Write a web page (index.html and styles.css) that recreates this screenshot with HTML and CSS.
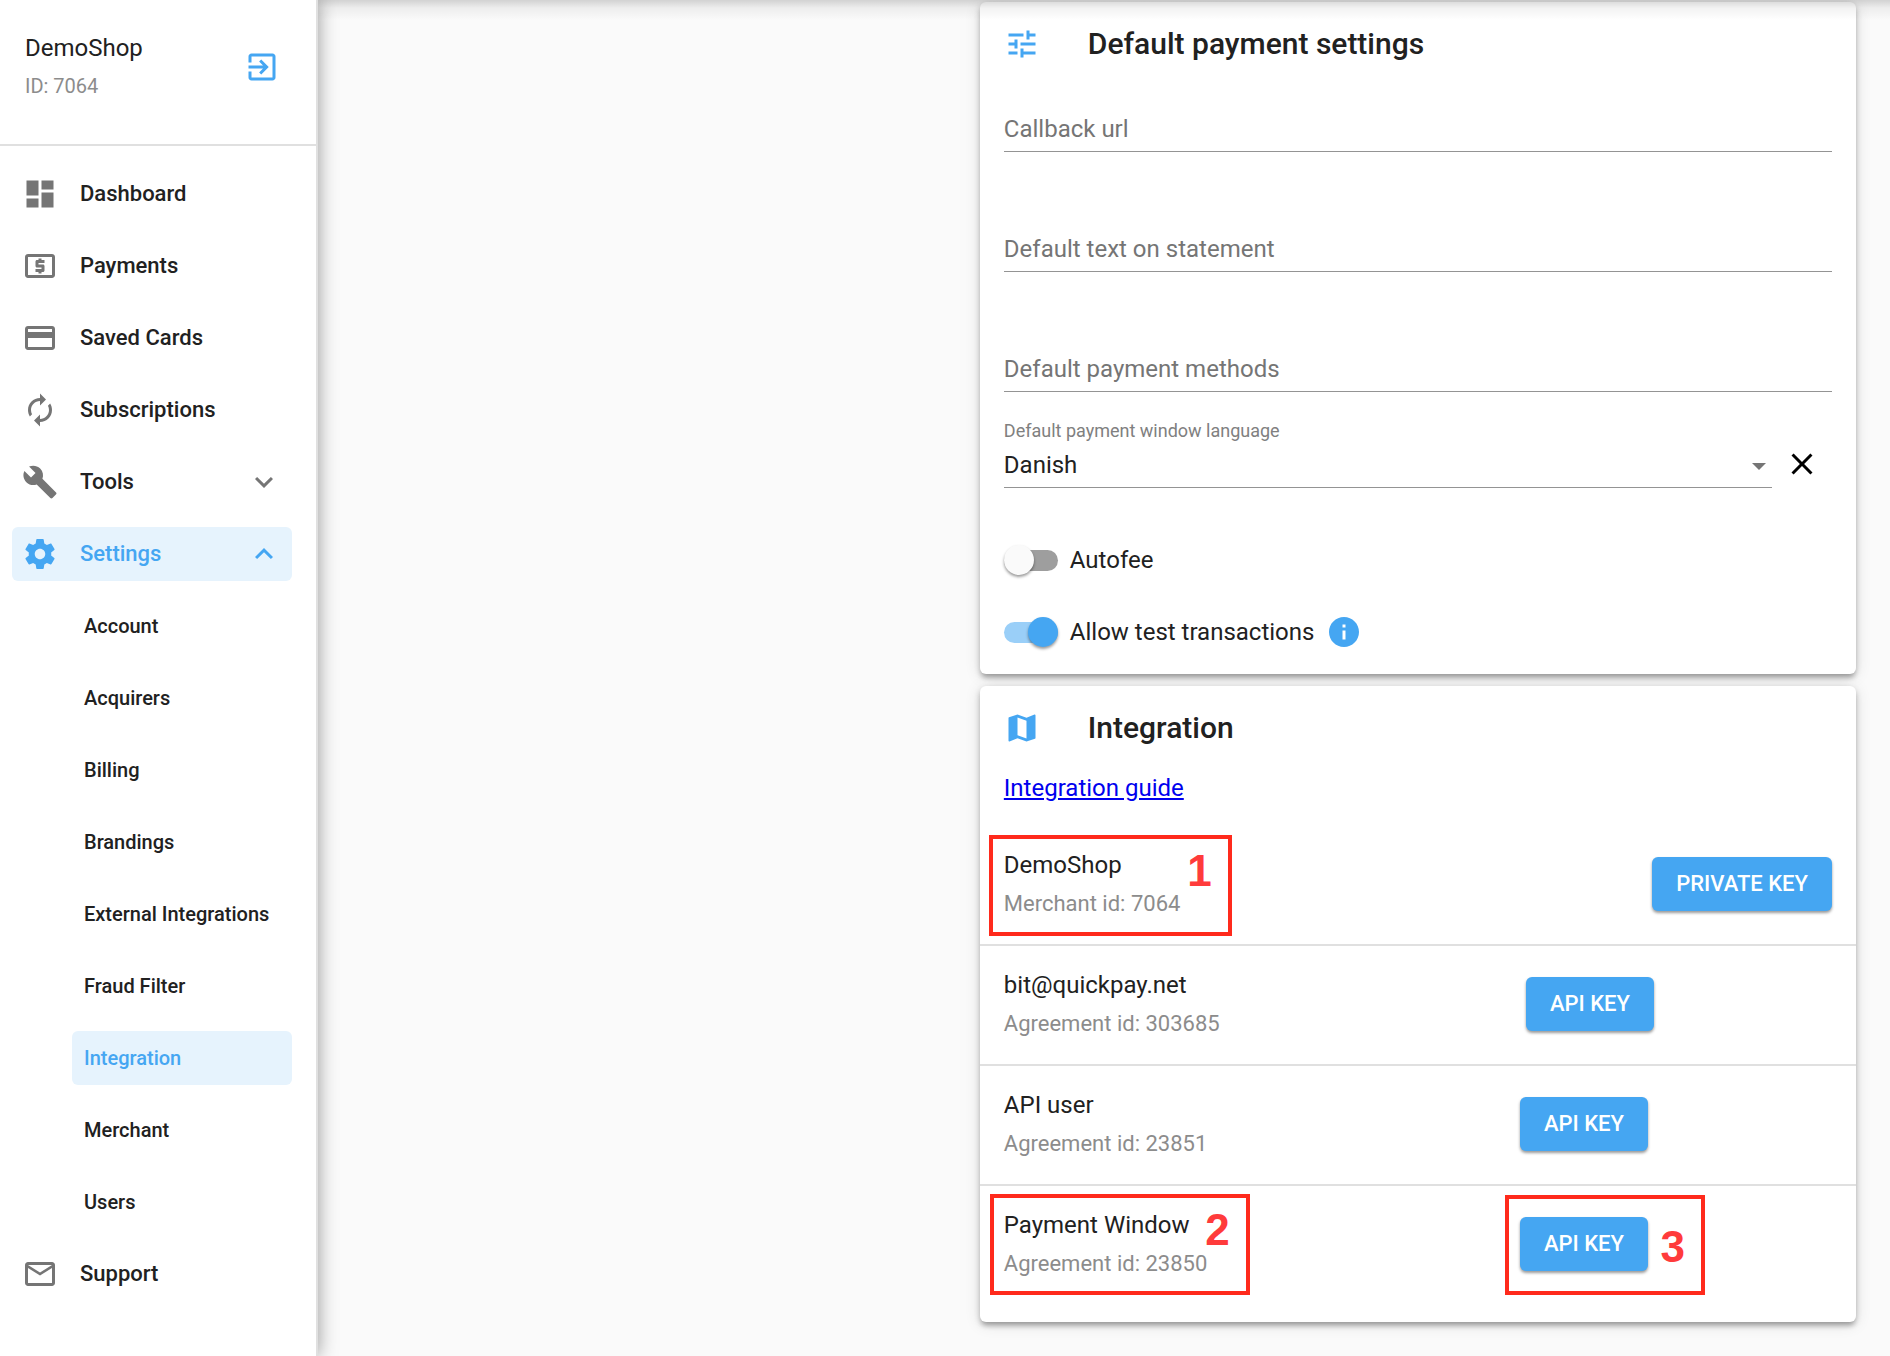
FILE: index.html
```html
<!DOCTYPE html>
<html lang="en">
<head>
    <meta charset="UTF-8">
    <meta name="viewport" content="width=device-width, initial-scale=1.0">
    <title>DemoShop - Integration</title>
    <link rel="stylesheet" href="styles.css">
</head>
<body>
    <div class="app">
        <aside class="sidebar">
            <div class="shop">
                <div class="lines">
                    <p class="name">DemoShop</p>
                    <p class="sub small">ID: 7064</p>
                </div>
                <button class="icon-btn blue" type="button" aria-label="Switch merchant">
                    <svg class="icon" viewBox="0 0 24 24"><path d="M10.09 15.59L11.5 17l5-5-5-5-1.41 1.41L12.67 11H3v2h9.67l-2.58 2.59zM19 3H5c-1.11 0-2 .9-2 2v4h2V5h14v14H5v-4H3v4c0 1.1.89 2 2 2h14c1.1 0 2-.9 2-2V5c0-1.1-.9-2-2-2z"/></svg>
                </button>
            </div>
            <nav class="nav">
                <a class="nav-item" href="#dashboard">
                    <svg class="icon" viewBox="0 0 24 24"><path d="M3 13h8V3H3v10zm0 8h8v-6H3v6zm10 0h8V11h-8v10zm0-18v6h8V3h-8z"/></svg>
                    <span>Dashboard</span>
                </a>
                <a class="nav-item" href="#payments">
                    <svg class="icon" viewBox="0 0 24 24"><path d="M11 17h2v-1h1c.55 0 1-.45 1-1v-3c0-.55-.45-1-1-1h-3v-1h4V8h-2V7h-2v1h-1c-.55 0-1 .45-1 1v3c0 .55.45 1 1 1h3v1H9v2h2v1zm9-13H4c-1.11 0-1.99.89-1.99 2L2 18c0 1.11.89 2 2 2h16c1.11 0 2-.89 2-2V6c0-1.11-.89-2-2-2zm0 14H4V6h16v12z"/></svg>
                    <span>Payments</span>
                </a>
                <a class="nav-item" href="#cards">
                    <svg class="icon" viewBox="0 0 24 24"><path d="M20 4H4c-1.11 0-1.99.89-1.99 2L2 18c0 1.11.89 2 2 2h16c1.11 0 2-.89 2-2V6c0-1.11-.89-2-2-2zm0 14H4v-6h16v6zm0-10H4V6h16v2z"/></svg>
                    <span>Saved Cards</span>
                </a>
                <a class="nav-item" href="#subscriptions">
                    <svg class="icon" viewBox="0 0 24 24"><path d="M12 6v3l4-4-4-4v3c-4.42 0-8 3.58-8 8 0 1.57.46 3.03 1.24 4.26L6.7 14.8c-.45-.83-.7-1.79-.7-2.8 0-3.31 2.69-6 6-6zm6.76 1.74L17.3 9.2c.44.84.7 1.79.7 2.8 0 3.31-2.69 6-6 6v-3l-4 4 4 4v-3c4.42 0 8-3.58 8-8 0-1.57-.46-3.03-1.24-4.26z"/></svg>
                    <span>Subscriptions</span>
                </a>
                <a class="nav-item" href="#tools">
                    <svg class="icon" viewBox="0 0 24 24"><path d="M22.7 19l-9.1-9.1c.9-2.3.4-5-1.5-6.9-2-2-5-2.4-7.4-1.3L9 6 6 9 1.6 4.7C.4 7.1.9 10.1 2.9 12.1c1.9 1.9 4.6 2.4 6.9 1.5l9.1 9.1c.4.4 1 .4 1.4 0l2.3-2.3c.5-.4.5-1.1.1-1.4z"/></svg>
                    <span>Tools</span>
                    <svg class="icon chevron" viewBox="0 0 24 24"><path d="M16.59 8.59L12 13.17 7.41 8.59 6 10l6 6 6-6z"/></svg>
                </a>
                <a class="nav-item active" href="#settings">
                    <svg class="icon" viewBox="0 0 24 24"><path d="M19.43 12.98c.04-.32.07-.64.07-.98s-.03-.66-.07-.98l2.11-1.65c.19-.15.24-.42.12-.64l-2-3.46c-.12-.22-.39-.3-.61-.22l-2.49 1c-.52-.4-1.08-.73-1.69-.98l-.38-2.65C14.46 2.18 14.25 2 14 2h-4c-.25 0-.46.18-.49.42l-.38 2.65c-.61.25-1.17.59-1.69.98l-2.49-1c-.23-.09-.49 0-.61.22l-2 3.46c-.13.22-.07.49.12.64l2.11 1.65c-.04.32-.07.65-.07.98s.03.66.07.98l-2.11 1.65c-.19.15-.24.42-.12.64l2 3.46c.12.22.39.3.61.22l2.49-1c.52.4 1.08.73 1.69.98l.38 2.65c.03.24.24.42.49.42h4c.25 0 .46-.18.49-.42l.38-2.65c.61-.25 1.17-.59 1.69-.98l2.49 1c.23.09.49 0 .61-.22l2-3.46c.12-.22.07-.49-.12-.64l-2.11-1.65zM12 15.5c-1.93 0-3.5-1.57-3.5-3.5s1.57-3.5 3.5-3.5 3.5 1.57 3.5 3.5-1.57 3.5-3.5 3.5z"/></svg>
                    <span>Settings</span>
                    <svg class="icon chevron" viewBox="0 0 24 24"><path d="M12 8l-6 6 1.41 1.41L12 10.83l4.59 4.58L18 14z"/></svg>
                </a>
                <div class="subnav">
                    <a class="nav-item" href="#account">Account</a>
                    <a class="nav-item" href="#acquirers">Acquirers</a>
                    <a class="nav-item" href="#billing">Billing</a>
                    <a class="nav-item" href="#brandings">Brandings</a>
                    <a class="nav-item" href="#external">External Integrations</a>
                    <a class="nav-item" href="#fraud">Fraud Filter</a>
                    <a class="nav-item active" href="#integration">Integration</a>
                    <a class="nav-item" href="#merchant">Merchant</a>
                    <a class="nav-item" href="#users">Users</a>
                </div>
                <a class="nav-item" href="#support">
                    <svg class="icon" viewBox="0 0 24 24"><path d="M20 4H4c-1.1 0-1.99.9-1.99 2L2 18c0 1.1.9 2 2 2h16c1.1 0 2-.9 2-2V6c0-1.1-.9-2-2-2zm0 14H4V8l8 5 8-5v10zm-8-7L4 6h16l-8 5z"/></svg>
                    <span>Support</span>
                </a>
            </nav>
        </aside>

        <main class="main">
            <div class="column">
                <section class="card">
                    <h2 class="card-title">
                        <svg class="icon blue" viewBox="0 0 24 24"><path d="M3 17v2h6v-2H3zM3 5v2h10V5H3zm10 16v-2h8v-2h-8v-2h-2v6h2zM7 9v2H3v2h4v2h2V9H7zm14 4v-2H11v2h10zm-6-4h2V7h4V5h-4V3h-2v6z"/></svg>
                        Default payment settings
                    </h2>
                    <div class="fields">
                        <input class="field" type="text" placeholder="Callback url" aria-label="Callback url">
                        <input class="field" type="text" placeholder="Default text on statement" aria-label="Default text on statement">
                        <input class="field" type="text" placeholder="Default payment methods" aria-label="Default payment methods">
                    </div>
                    <div class="language">
                        <div class="language-select">
                            <label for="language">Default payment window language</label>
                            <select class="field" id="language">
                                <option>Danish</option>
                            </select>
                            <svg class="arrow" viewBox="0 0 14 7"><path d="M0 0h14L7 7z"/></svg>
                        </div>
                        <button class="icon-btn clear" type="button" aria-label="Clear language">
                            <svg class="icon" viewBox="0 0 24 24"><path d="M19 6.41L17.59 5 12 10.59 6.41 5 5 6.41 10.59 12 5 17.59 6.41 19 12 13.41 17.59 19 19 17.59 13.41 12z"/></svg>
                        </button>
                    </div>
                    <div class="switches">
                        <div class="switch-row">
                            <input class="switch" type="checkbox" id="autofee">
                            <label for="autofee">Autofee</label>
                        </div>
                        <div class="switch-row">
                            <input class="switch" type="checkbox" id="testmode" checked>
                            <label for="testmode">Allow test transactions</label>
                            <svg class="icon blue" viewBox="0 0 24 24"><path d="M12 2C6.48 2 2 6.48 2 12s4.48 10 10 10 10-4.48 10-10S17.52 2 12 2zm1 15h-2v-6h2v6zm0-8h-2V7h2v2z"/></svg>
                        </div>
                    </div>
                </section>

                <section class="card integration">
                    <h2 class="card-title">
                        <svg class="icon blue" viewBox="0 0 24 24"><path d="M20.5 3l-.16.03L15 5.1 9 3 3.36 4.9c-.21.07-.36.25-.36.48V20.5c0 .28.22.5.5.5l.16-.03L9 18.9l6 2.1 5.64-1.9c.21-.07.36-.25.36-.48V3.5c0-.28-.22-.5-.5-.5zM15 19l-6-2.11V5l6 2.11V19z"/></svg>
                        Integration
                    </h2>
                    <a class="guide" href="#guide">Integration guide</a>
                    <ul class="keys">
                        <li class="key-row">
                            <div class="lines">
                                <p class="name">DemoShop</p>
                                <p class="sub">Merchant id: 7064</p>
                            </div>
                            <button class="btn" type="button">PRIVATE KEY</button>
                            <div class="mark mark-merchant">1</div>
                        </li>
                        <li class="key-row">
                            <div class="lines">
                                <p class="name">bit@quickpay.net</p>
                                <p class="sub">Agreement id: 303685</p>
                            </div>
                            <div class="action owner">
                                <button class="btn" type="button">API KEY</button>
                            </div>
                        </li>
                        <li class="key-row">
                            <div class="lines">
                                <p class="name">API user</p>
                                <p class="sub">Agreement id: 23851</p>
                            </div>
                            <div class="action">
                                <button class="btn" type="button">API KEY</button>
                            </div>
                        </li>
                        <li class="key-row">
                            <div class="lines">
                                <p class="name">Payment Window</p>
                                <p class="sub">Agreement id: 23850</p>
                            </div>
                            <div class="action">
                                <button class="btn" type="button">API KEY</button>
                                <div class="mark mark-key">3</div>
                            </div>
                            <div class="mark mark-window">2</div>
                        </li>
                    </ul>
                </section>
            </div>
        </main>
    </div>
</body>
</html>
```

FILE: styles.css
```css
* {
    margin: 0;
    padding: 0;
    box-sizing: border-box;
}

body {
    font-family: Roboto, "Liberation Sans", sans-serif;
    font-size: 24px;
    line-height: 30px;
    color: #212121;
    background-color: #fafafa;
}

button,
input,
select {
    font: inherit;
    color: inherit;
    border: 0;
    background: none;
}

.app {
    display: flex;
    min-height: 100vh;
}

.icon {
    display: block;
    flex: none;
    width: 36px;
    height: 36px;
    fill: currentColor;
}

.icon-btn {
    flex: none;
    cursor: pointer;
}

.blue {
    color: #45a6f2;
}

.lines {
    display: flex;
    flex-direction: column;
    gap: 9px;
}

.sub {
    font-size: 22px;
    line-height: 29px;
    color: #8c8c8c;
}

.sub.small {
    font-size: 20px;
}

/* sidebar */
.sidebar {
    flex: none;
    width: 318px;
    background-color: #fff;
    border-right: 2px solid #e0e0e0;
    box-shadow: 0 0 18px rgba(0, 0, 0, 0.4);
    z-index: 2;
}

.shop {
    display: flex;
    justify-content: space-between;
    align-items: center;
    padding: 33px 36px 43px 25px;
    border-bottom: 2px solid #e0e0e0;
}

.nav {
    display: flex;
    flex-direction: column;
    gap: 18px;
    padding: 21px 24px 21px 12px;
}

.nav-item {
    display: flex;
    align-items: center;
    gap: 22px;
    height: 54px;
    padding: 0 10px;
    border-radius: 6px;
    font-size: 22px;
    font-weight: 500;
    color: #212121;
    text-decoration: none;
}

.nav-item .icon {
    color: #757575;
}

.nav-item .chevron {
    margin-left: auto;
}

.nav-item.active {
    background-color: #e6f3fd;
}

.nav-item.active,
.nav-item.active .icon {
    color: #45a6f2;
}

.subnav {
    display: flex;
    flex-direction: column;
    gap: 18px;
    padding-left: 60px;
}

.subnav .nav-item {
    padding: 0 12px;
    font-size: 20px;
}

/* content */
.main {
    flex: 1;
    display: grid;
    grid-template-columns: 5fr 7fr;
    align-items: start;
    padding: 2px 34px 34px 36px;
    position: relative;
}

/* shadow of the toolbar above */
.main::before {
    content: "";
    position: absolute;
    top: 0;
    left: 0;
    right: 0;
    height: 20px;
    background: linear-gradient(rgba(0, 0, 0, 0.16), rgba(0, 0, 0, 0.05) 40%, rgba(0, 0, 0, 0));
    z-index: 1;
    pointer-events: none;
}

.column {
    grid-column: 2;
    display: flex;
    flex-direction: column;
    gap: 12px;
}

.card {
    padding: 24px;
    background-color: #fff;
    border-radius: 6px;
    box-shadow: 0 5px 5px -2px rgba(0, 0, 0, 0.2), 0 3px 6px rgba(0, 0, 0, 0.2), 0 2px 16px rgba(0, 0, 0, 0.12);
}

.card-title {
    display: flex;
    align-items: center;
    gap: 48px;
    padding-right: 12px;
    font-size: 30px;
    line-height: 36px;
    font-weight: 500;
}

.fields {
    display: flex;
    flex-direction: column;
    gap: 74px;
    margin-top: 44px;
}

.field {
    display: block;
    width: 100%;
    height: 46px;
    border-bottom: 1px solid #949494;
    border-radius: 0;
    outline: none;
}

.field::placeholder {
    color: #757575;
    opacity: 1;
}

.language {
    display: flex;
    align-items: flex-end;
    margin-top: 28px;
}

.language-select {
    flex: 1;
    position: relative;
}

.language-select label {
    display: block;
    font-size: 18px;
    line-height: 22px;
    color: #808080;
}

.language-select select {
    appearance: none;
}

.arrow {
    position: absolute;
    right: 6px;
    bottom: 18px;
    width: 14px;
    height: 7px;
    fill: #757575;
    pointer-events: none;
}

.clear {
    margin: 0 12px 6px;
    color: #000;
}

.switches {
    display: flex;
    flex-direction: column;
    gap: 36px;
    margin-top: 54px;
}

.switch-row {
    display: flex;
    align-items: center;
    gap: 12px;
    height: 36px;
}

.switch {
    appearance: none;
    display: flex;
    align-items: center;
    width: 54px;
    height: 21px;
    border-radius: 12px;
    background-color: #9e9e9e;
}

.switch::before {
    content: "";
    width: 30px;
    height: 30px;
    border-radius: 50%;
    background-color: #fafafa;
    box-shadow: 0 2px 3px rgba(0, 0, 0, 0.4);
}

.switch:checked {
    justify-content: flex-end;
    background-color: #9acff8;
}

.switch:checked::before {
    background-color: #45a6f2;
}

/* integration */
.integration {
    padding-bottom: 18px;
}

.guide {
    display: inline-block;
    margin-top: 27px;
    color: #0000ee;
}

.keys {
    margin: 23px -24px 0;
    list-style: none;
}

.key-row {
    display: flex;
    justify-content: space-between;
    align-items: center;
    padding: 24px 24px 26px;
    border-bottom: 2px solid #e0e0e0;
    position: relative;
}

.key-row:last-child {
    border-bottom: 0;
}

.action {
    margin-right: 184px;
    position: relative;
}

.action.owner {
    margin-right: 178px;
}

.btn {
    display: block;
    height: 54px;
    padding: 0 24px;
    border-radius: 6px;
    font-size: 22px;
    font-weight: 500;
    color: #fff;
    background-color: #45a6f2;
    box-shadow: 0 2px 3px rgba(0, 0, 0, 0.4);
    cursor: pointer;
}

/* numbered callouts over the list */
.mark {
    position: absolute;
    display: flex;
    justify-content: flex-end;
    padding: 10px 16px;
    border: 4px solid #ff2a1c;
    font-family: "Liberation Sans", sans-serif;
    font-size: 44px;
    line-height: 44px;
    font-weight: bold;
    color: #ff3b3b;
    pointer-events: none;
}

.mark-merchant {
    top: 9px;
    left: 9px;
    width: 243px;
    height: 101px;
}

.mark-window {
    top: 8px;
    left: 10px;
    width: 260px;
    height: 101px;
}

.mark-key {
    align-items: flex-end;
    padding-bottom: 22px;
    top: -22px;
    left: -15px;
    width: 200px;
    height: 100px;
}
```
